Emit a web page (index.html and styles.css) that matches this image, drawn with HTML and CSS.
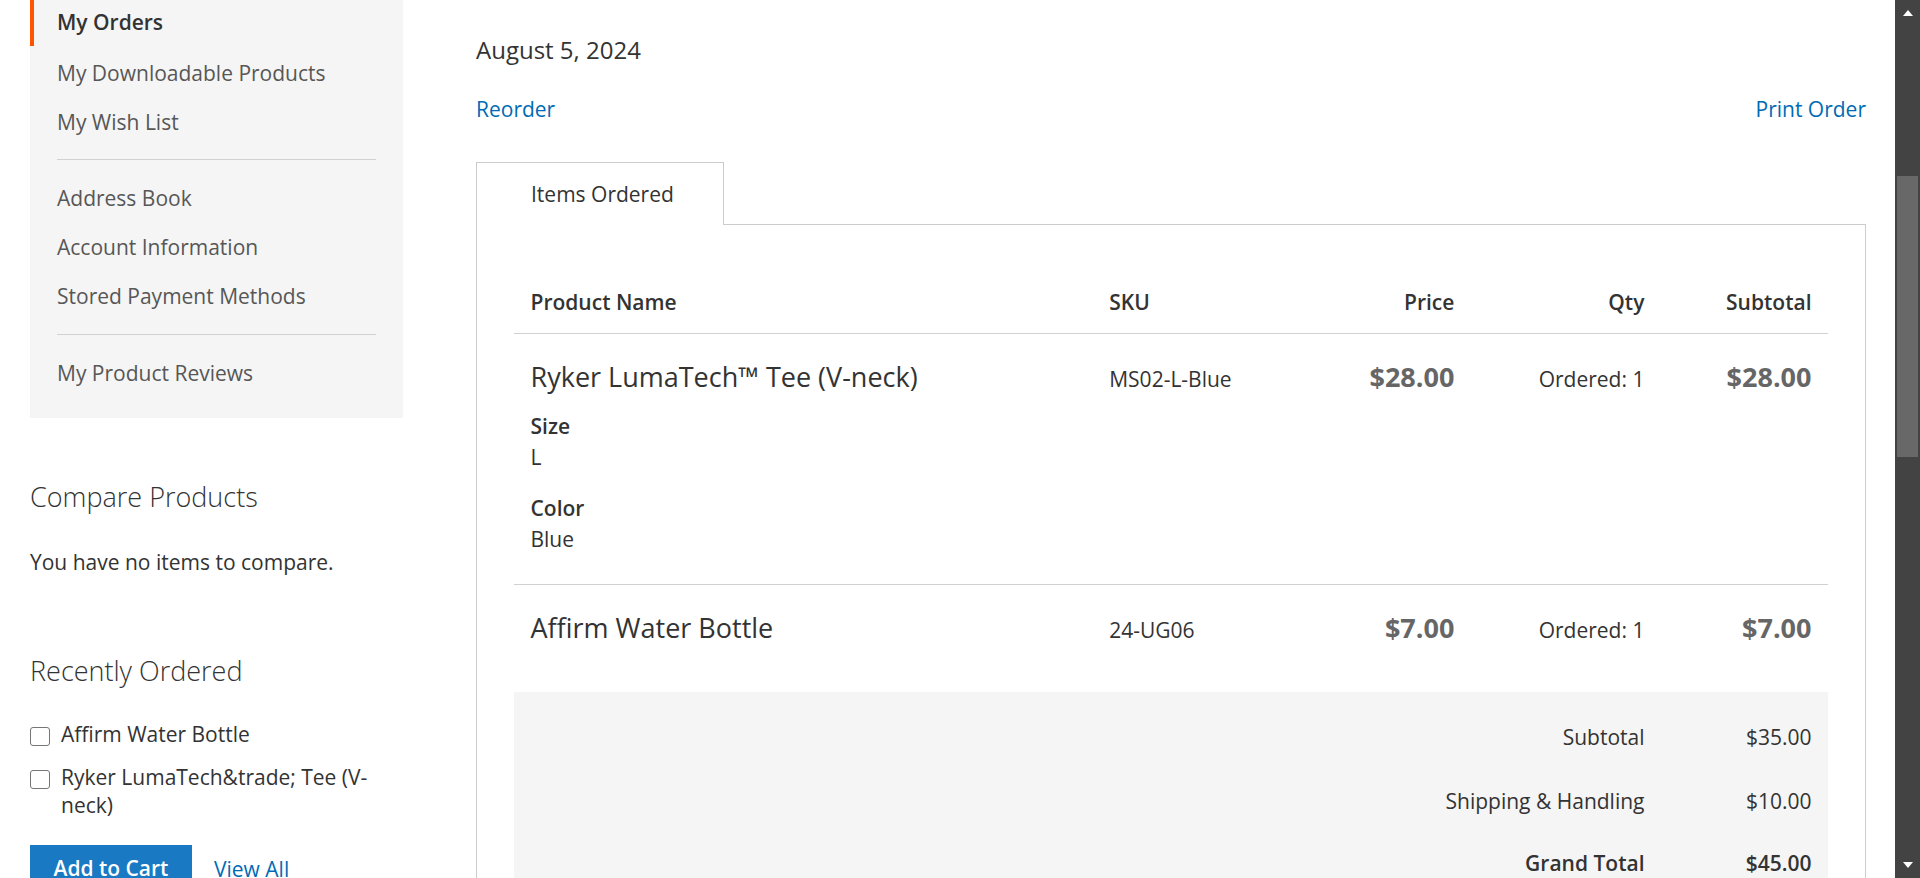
FILE: index.html
```html
<!DOCTYPE html>
<html lang="en">
<head>
<meta charset="utf-8">
<title>Order</title>
<link rel="stylesheet" href="styles.css">
</head>
<body>
<div class="window">
  <div class="page">
    <aside class="sidebar">
      <nav class="account-nav">
        <ul class="nav-items">
          <li class="nav-item current"><strong>My Orders</strong></li>
          <li class="nav-item"><a href="#">My Downloadable Products</a></li>
          <li class="nav-item"><a href="#">My Wish List</a></li>
          <li class="delimiter"></li>
          <li class="nav-item"><a href="#">Address Book</a></li>
          <li class="nav-item"><a href="#">Account Information</a></li>
          <li class="nav-item"><a href="#">Stored Payment Methods</a></li>
          <li class="delimiter"></li>
          <li class="nav-item"><a href="#">My Product Reviews</a></li>
        </ul>
      </nav>

      <section class="block compare">
        <h2 class="block-title">Compare Products</h2>
        <p class="block-empty">You have no items to compare.</p>
      </section>

      <section class="block reorder">
        <h2 class="block-title">Recently Ordered</h2>
        <ol class="reorder-list">
          <li class="reorder-item"><input type="checkbox" class="check"><span class="reorder-name">Affirm Water Bottle</span></li>
          <li class="reorder-item"><input type="checkbox" class="check"><span class="reorder-name">Ryker LumaTech&amp;trade; Tee (V-neck)</span></li>
        </ol>
        <div class="actions">
          <button class="btn-primary">Add to Cart</button>
          <a href="#" class="link">View All</a>
        </div>
      </section>
    </aside>

    <main class="main">
      <div class="order-date">August 5, 2024</div>
      <div class="order-actions">
        <a href="#" class="link">Reorder</a>
        <a href="#" class="link">Print Order</a>
      </div>

      <div class="tabs">
        <div class="tab-title">Items Ordered</div>
      </div>
      <div class="tab-content">
        <table class="items">
          <colgroup>
            <col class="c-name"><col class="c-sku"><col class="c-price"><col class="c-qty"><col class="c-sub">
          </colgroup>
          <thead>
            <tr>
              <th class="left">Product Name</th>
              <th class="left">SKU</th>
              <th class="right">Price</th>
              <th class="right">Qty</th>
              <th class="right">Subtotal</th>
            </tr>
          </thead>
          <tbody>
            <tr>
              <td>
                <div class="product-name">Ryker LumaTech™ Tee (V-neck)</div>
                <dl class="options">
                  <dt>Size</dt>
                  <dd>L</dd>
                  <dt>Color</dt>
                  <dd>Blue</dd>
                </dl>
              </td>
              <td class="sku">MS02-L-Blue</td>
              <td class="right"><span class="price">$28.00</span></td>
              <td class="right qty">Ordered: 1</td>
              <td class="right"><span class="price">$28.00</span></td>
            </tr>
            <tr>
              <td><div class="product-name">Affirm Water Bottle</div></td>
              <td class="sku">24-UG06</td>
              <td class="right"><span class="price">$7.00</span></td>
              <td class="right qty">Ordered: 1</td>
              <td class="right"><span class="price">$7.00</span></td>
            </tr>
          </tbody>
        </table>

        <div class="totals">
          <div class="t-row first">
            <span class="t-label">Subtotal</span><span class="t-value">$35.00</span>
          </div>
          <div class="t-row">
            <span class="t-label">Shipping &amp; Handling</span><span class="t-value">$10.00</span>
          </div>
          <div class="t-row grand">
            <span class="t-label">Grand Total</span><span class="t-value">$45.00</span>
          </div>
        </div>
      </div>
    </main>
  </div>

  <div class="scrollbar">
    <div class="arrow up"></div>
    <div class="track">
      <div class="thumb"></div>
    </div>
    <div class="arrow down"></div>
  </div>
</div>
</body>
</html>
```

FILE: styles.css
```css
* { box-sizing: border-box; }

html, body {
  margin: 0;
  padding: 0;
  height: 878px;
  overflow: hidden;
  background: #fff;
}

body {
  font-family: "Open Sans", "Noto Sans", sans-serif;
  font-size: 21px;
  line-height: 30px;
  color: #333;
}

.window {
  display: flex;
  height: 878px;
}

.page {
  flex: 1;
  display: flex;
  gap: 73px;
  padding: 0 29px 0 30px;
  min-width: 0;
}

/* ---------- sidebar ---------- */
.sidebar {
  width: 373px;
  flex: none;
}

.account-nav {
  background: #f5f5f5;
  padding-bottom: 20.5px;
}

.nav-items {
  list-style: none;
  margin: 0;
  padding: 0;
}

.nav-item {
  line-height: 34px;
  padding: 7.5px 27px 7.5px 27px;
}

.nav-item a {
  color: #575757;
  text-decoration: none;
}

.nav-item.current {
  border-left: 4px solid #ff5501;
  padding: 5px 27px 7px 23px;
  margin-bottom: 2px;
}

.nav-item.current strong {
  font-weight: 600;
  color: #333;
}

.delimiter {
  border-top: 1px solid #d1d1d1;
  margin: 13px 27px 13.5px;
}

.block-title {
  margin: 0;
  font-size: 27px;
  font-weight: 300;
  line-height: 29.7px;
  color: #333;
}

.compare {
  padding-top: 64px;
}

.block-empty {
  margin: 35.5px 0 0;
}

.reorder {
  padding-top: 78.9px;
}

.reorder-list {
  list-style: none;
  margin: 35.8px 0 0;
  padding: 0;
  display: flex;
  flex-direction: column;
  gap: 15.7px;
}

.reorder-item {
  display: flex;
  align-items: flex-start;
  gap: 11.5px;
  line-height: 27.5px;
}

.check {
  appearance: none;
  -webkit-appearance: none;
  flex: none;
  width: 19.5px;
  height: 19.5px;
  margin: 5.5px 0 0;
  border: 1.5px solid #767676;
  border-radius: 3px;
  background: #fff;
}

.reorder-name {
  color: #333;
}

.actions {
  display: flex;
  align-items: flex-start;
  gap: 22px;
  margin-top: 25.5px;
}

.btn-primary {
  font-family: inherit;
  font-size: 21px;
  font-weight: 600;
  line-height: 24px;
  color: #fff;
  background: #1979c3;
  border: 1.5px solid #1979c3;
  padding: 10.5px 22.5px;
  border-radius: 0;
  width: 162px;
  text-align: left;
}

.actions .link {
  line-height: 24px;
  padding-top: 12px;
}

.link {
  color: #006bb4;
  text-decoration: none;
}

/* ---------- main ---------- */
.main {
  flex: 1;
  min-width: 0;
}

.order-date {
  font-size: 24px;
  line-height: 30px;
  margin-top: 34.7px;
}

.order-actions {
  display: flex;
  justify-content: space-between;
  margin-top: 29px;
}

.tabs {
  display: flex;
  margin-top: 38px;
  position: relative;
  z-index: 1;
}

.tab-title {
  width: 248px;
  height: 63px;
  border: 1px solid #cccccc;
  border-bottom: none;
  background: #fff;
  padding: 15.85px 0 0 54px;
  line-height: 30px;
  color: #333;
  margin-bottom: -1px;
}

.tab-content {
  border: 1px solid #cccccc;
  border-bottom: none;
  padding: 45.4px 37px 0 37px;
  height: 700px;
}

.items {
  width: 100%;
  border-collapse: collapse;
  table-layout: fixed;
}

.c-name { width: 578.5px; }
.c-sku { width: 207.5px; }
.c-price { width: 170.5px; }
.c-qty { width: 190px; }
.c-sub { width: 167px; }

.items th {
  font-weight: 600;
  color: #333;
  padding: 16.5px;
  line-height: 30px;
  border-bottom: 1px solid #d1d1d1;
}

.left { text-align: left; }
.right { text-align: right; }

.items td {
  vertical-align: top;
  padding: 30px 16.5px 29px;
  line-height: 30px;
}

.items tbody tr:first-child td {
  border-bottom: 1px solid #d1d1d1;
}

.product-name {
  font-size: 27px;
  line-height: 25px;
  color: #333;
}

.options {
  margin: 22px 0 0;
}

.options dt {
  font-weight: 600;
  line-height: 31px;
}

.options dd {
  margin: 0 0 20px;
  line-height: 31px;
}

.options dd:last-child {
  margin-bottom: 0;
}

.price {
  font-size: 27px;
  font-weight: 700;
  line-height: 25px;
  color: #666;
  display: inline-block;
}

.totals {
  margin-top: 18px;
  background: #f5f5f5;
  padding-top: 13px;
}

.t-row {
  display: grid;
  grid-template-columns: 1fr 167px;
  padding: 17px 0;
  line-height: 30px;
}

.t-label,
.t-value {
  text-align: right;
  padding-right: 16.5px;
}

.t-row.grand {
  padding-top: 14.5px;
  font-weight: 600;
}

/* ---------- fake browser scrollbar ---------- */
.scrollbar {
  width: 25px;
  flex: none;
  background: #434343;
  display: flex;
  flex-direction: column;
  align-items: center;
}

.arrow {
  width: 0;
  height: 0;
  border-left: 5.5px solid transparent;
  border-right: 5.5px solid transparent;
  flex: none;
}

.arrow.up {
  border-bottom: 6px solid #fff;
  margin-top: 10px;
}

.arrow.down {
  border-top: 6px solid #fff;
  margin-bottom: 10px;
}

.track {
  flex: 1;
  width: 100%;
  padding: 160px 2px 0 2px;
}

.thumb {
  height: 281px;
  background: #686868;
}
```
